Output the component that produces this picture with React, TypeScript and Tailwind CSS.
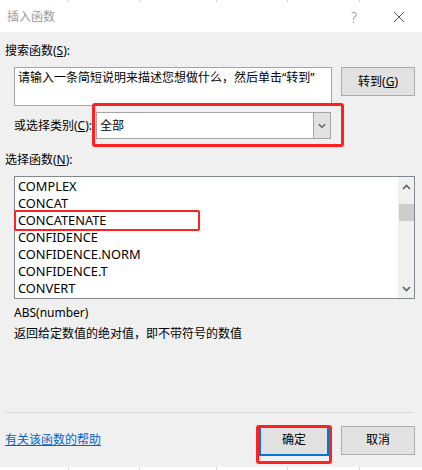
import React from "react";

const FONT = { fontFamily: '"Noto Sans", "Noto Sans CJK SC", sans-serif' };

const FUNCTIONS = [
  "COMPLEX",
  "CONCAT",
  "CONCATENATE",
  "CONFIDENCE",
  "CONFIDENCE.NORM",
  "CONFIDENCE.T",
  "CONVERT",
];

function Chevron({ up = false, className = "" }: { up?: boolean; className?: string }) {
  return (
    <svg width="9" height="6" viewBox="0 0 9 6" className={className}>
      <path
        d={up ? "M1 5 L4.5 1.5 L8 5" : "M1 1 L4.5 4.5 L8 1"}
        fill="none"
        stroke="#606060"
        strokeWidth={1.6}
      />
    </svg>
  );
}

function GridStrip({ className = "" }: { className?: string }) {
  return (
    <div className={`flex bg-white ${className}`}>
      <div className="w-[68px]" />
      <div className="w-px bg-[#d4d4d4]" />
      <div className="w-[70px]" />
      <div className="w-px bg-[#d4d4d4]" />
      <div className="w-[76px]" />
      <div className="w-px bg-[#d4d4d4]" />
      <div className="w-[70px]" />
      <div className="w-px bg-[#d4d4d4]" />
      <div className="w-[71px]" />
      <div className="w-px bg-[#d4d4d4]" />
    </div>
  );
}

export default function App() {
  return (
    <div
      className="relative w-[422px] h-[470px] bg-[#f0f0f0] flex flex-col overflow-hidden text-[12px] text-black"
      style={FONT}
    >
      <GridStrip className="h-[2px]" />

      {/* title bar */}
      <div className="h-[30px] bg-white flex items-center pl-[7px] pr-[17px]">
        <span className="text-[#9a9a9a] text-[12px]">插入函数</span>
        <span className="ml-auto mr-[36px] text-[#8a8a8a] text-[14px] font-light">?</span>
        <svg width="12" height="12" viewBox="0 0 12 12">
          <path d="M1 1 L11 11 M11 1 L1 11" stroke="#555" strokeWidth={1} />
        </svg>
      </div>

      <div className="flex flex-col flex-1 pl-[5px] pr-[7px]">
        <div className="mt-[10px] h-[17px] leading-[17px]">
          搜索函数(<span className="underline">S</span>):
        </div>

        <div className="mt-[8px] flex pl-[9px] gap-[9px] items-start">
          <div className="w-[318px] h-[39px] bg-white border border-[#a5a5a5] px-[3px] pt-px leading-[17px]">
            请输入一条简短说明来描述您想做什么，然后单击“转到”
          </div>
          <button className="w-[74px] h-[29px] bg-[#e1e1e1] border border-[#adadad] leading-none">
            转到(<span className="underline">G</span>)
          </button>
        </div>

        <div className="mt-[6px] flex items-center pl-[9px]">
          <span className="w-[82px] leading-[17px]">
            或选择类别(<span className="underline">C</span>):
          </span>
          <div className="w-[235px] h-[27px] bg-white border border-[#a5a5a5] flex items-center">
            <span className="pl-[3px] flex-1">全部</span>
            <div className="w-[17px] h-full bg-[#e1e1e1] border-l border-[#a5a5a5] flex items-center justify-center">
              <Chevron className="w-[8px]" />
            </div>
          </div>
        </div>

        <div className="mt-[12px] h-[17px] leading-[17px]">
          选择函数(<span className="underline">N</span>):
        </div>

        <div className="mt-[8px] ml-[9px] w-[401px] h-[123px] bg-white border border-[#828790] flex">
          <div className="flex-1 pt-px pl-[3px] text-[12.8px]">
            {FUNCTIONS.map((f) => (
              <div key={f} className="h-[17px] leading-[17px]">
                {f}
              </div>
            ))}
          </div>
          <div className="w-[16px] bg-[#f0f0f0] flex flex-col items-center">
            <div className="h-[20px] flex items-center justify-center">
              <Chevron up />
            </div>
            <div className="mt-[7px] w-[15px] h-[17px] bg-[#cdcdcd]" />
            <div className="mt-auto h-[18px] flex items-center justify-center">
              <Chevron />
            </div>
          </div>
        </div>

        <div className="mt-[5px] ml-[9px] h-[17px] leading-[17px]">ABS(number)</div>
        <div className="mt-[4px] ml-[9px] h-[17px] leading-[17px]">
          返回给定数值的绝对值，即不带符号的数值
        </div>

        <div className="mt-auto h-px bg-[#d9d9d9] mr-[2px]" />

        <div className="h-[54px] flex items-center">
          <a className="text-[#0066cc] underline leading-[17px] -mt-[2px]" href="#">
            有关该函数的帮助
          </a>
          <button className="ml-auto w-[70px] h-[31px] bg-[#e1e1e1] border-2 border-[#0078d7] leading-none">
            确定
          </button>
          <button className="ml-[12px] w-[74px] h-[29px] bg-[#e1e1e1] border border-[#adadad] leading-none">
            取消
          </button>
        </div>
      </div>

      <GridStrip className="h-[3px]" />

      {/* red highlight annotations */}
      <div className="absolute left-[92px] top-[103px] w-[252px] h-[44px] border-[3px] border-[#ff2020] rounded-[3px]" />
      <div className="absolute left-[14px] top-[210px] w-[186px] h-[21px] border-[2px] border-[#ff2020] rounded-[2px]" />
      <div className="absolute left-[256px] top-[425px] w-[76px] h-[39px] border-[3px] border-[#ff2020] rounded-[3px]" />
    </div>
  );
}
